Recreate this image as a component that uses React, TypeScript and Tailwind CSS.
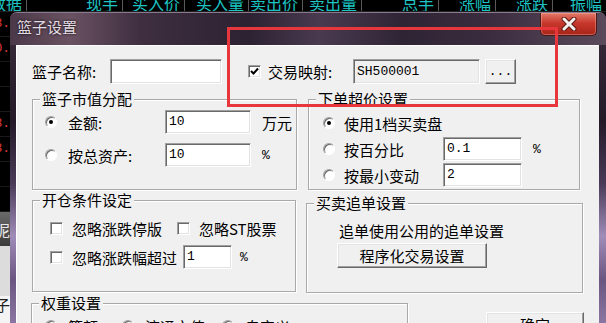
import React from 'react';

const headers = [
  { w: 'w-[27px]', t: '数据' },
  { w: 'w-[96px]', t: '现手' },
  { w: 'w-[62px]', t: '买入价' },
  { w: 'w-[64px]', t: '买入量' },
  { w: 'w-[54px]', t: '卖出价' },
  { w: 'w-[59px]', t: '卖出量' },
  { w: 'w-[77px]', t: '总手' },
  { w: 'w-[57px]', t: '涨幅' },
  { w: 'w-[57px]', t: '涨跌' },
  { w: 'w-[53px]', t: '振幅' },
];

const sideRows = ['3.', '0.', '', '', '3.', '3.', '', ''];

function Edit({ className, value }: { className: string; value?: string }) {
  return (
    <div
      className={`flex items-center box-border border border-t-[#a0a0a0] border-l-[#a0a0a0] border-r-white border-b-white shadow-[inset_1px_1px_0_#696969,inset_-1px_-1px_0_#e3e3e3] pl-[3px] font-['Liberation_Mono',monospace] text-[13px] leading-[16px] ${className}`}
    >
      {value}
    </div>
  );
}

function Radio({ on }: { on?: boolean }) {
  return (
    <span className="flex items-center justify-center w-[12px] h-[12px] shrink-0 rounded-full bg-white border border-t-[#a0a0a0] border-l-[#a0a0a0] border-r-white border-b-white shadow-[inset_1px_1px_0_#696969]">
      {on && <span className="w-[4px] h-[4px] rounded-full bg-black" />}
    </span>
  );
}

function Check({ on }: { on?: boolean }) {
  return (
    <span className="flex items-center justify-center w-[13px] h-[13px] shrink-0 bg-white border border-t-[#a0a0a0] border-l-[#a0a0a0] border-r-white border-b-white shadow-[inset_1px_1px_0_#696969,inset_-1px_-1px_0_#e3e3e3]">
      {on && (
        <svg width="9" height="9" viewBox="0 0 9 9">
          <path d="M1 4 L3.5 6.5 L8 1.5" fill="none" stroke="#000" strokeWidth="2" />
        </svg>
      )}
    </span>
  );
}

function Button({ className, children }: { className: string; children: React.ReactNode }) {
  return (
    <div
      className={`flex items-center justify-center box-border bg-[#f0f0f0] border border-t-white border-l-white border-r-[#696969] border-b-[#696969] shadow-[inset_-1px_-1px_0_#a0a0a0,inset_1px_1px_0_#e3e3e3] ${className}`}
    >
      {children}
    </div>
  );
}

function Group({ label, className, children }: { label: string; className: string; children?: React.ReactNode }) {
  return (
    <div className={`relative box-border border border-[#a9a9a9] shadow-[inset_1px_1px_0_#fff,1px_1px_0_#fff] ${className}`}>
      <span className="absolute left-[7px] -top-[10px] px-[2px] bg-[#f0f0f0] leading-[18px] whitespace-nowrap">{label}</span>
      {children}
    </div>
  );
}

export default function App() {
  return (
    <div className="relative w-[606px] h-[323px] overflow-hidden bg-black font-['Noto_Sans_CJK_SC','Noto_Sans',sans-serif]">
      {/* quote table behind the dialog */}
      <div className="flex h-[12px] border-b border-[#202020]">
        {headers.map((h) => (
          <div key={h.t} className={`${h.w} flex items-end justify-end h-[11px] overflow-hidden pr-[4px] border-r border-[#5a5a5a] last:border-r-0`}>
            <span className="text-[16px] leading-[16px] text-[#1cc4c4] whitespace-nowrap">{h.t}</span>
          </div>
        ))}
      </div>
      <div className="flex flex-col w-[10px]">
        {sideRows.map((n, i) => (
          <div key={i} className="flex items-center justify-end h-[25px] overflow-hidden border-b border-[#1a1a1a]">
            <span className="font-['Liberation_Mono',monospace] text-[13px] leading-[14px] text-[#e03a3a] whitespace-nowrap">{n}</span>
          </div>
        ))}
        <div className="flex items-center justify-end h-[34px] overflow-hidden bg-[linear-gradient(180deg,#6a6a6a,#3a3a3a)]">
          <span className="text-[15px] leading-[17px] text-[#e8e8e8] whitespace-nowrap">汇泥</span>
        </div>
        <div className="h-[50px] bg-[#dcdcdc]" />
        <div className="flex items-start justify-end h-[30px] overflow-hidden bg-[#f4f4f4]">
          <span className="text-[15px] leading-[17px] text-[#202020] whitespace-nowrap">篮子</span>
        </div>
      </div>

      {/* dialog window */}
      <div className="absolute left-[10px] top-[12px] w-[596px] h-[311px] flex flex-col rounded-t-[7px] border-t border-[#8a7a90] overflow-hidden bg-[linear-gradient(180deg,#3a2c3c_0%,#241a28_35%,#4a3a58_55%,#a08cb8_72%,#6a5680_86%,#8a76a0_100%)]">
        <div className="h-[32px] flex items-start bg-[linear-gradient(90deg,#4a3848_0%,#6a5262_10%,#3e2e40_22%,#2c2232_40%,#4a3a50_52%,#2e2434_66%,#3a2c3e_80%,#5a4a5c_100%)]">
          <span className="ml-[7px] mt-[5px] text-[15px] leading-[18px] text-[#e4dce4] [text-shadow:0_0_3px_#000]">篮子设置</span>
          <div className="ml-auto mr-[9px] w-[57px] h-[23px] flex items-center justify-center rounded-b-[5px] border border-t-0 border-[#4a1818] bg-[linear-gradient(180deg,#e27a6a_0%,#c8382c_45%,#a82418_100%)] shadow-[inset_0_0_0_1px_rgba(255,200,190,0.35)]">
            <svg width="16" height="14" viewBox="0 0 16 14">
              <path d="M3 2 L13 12 M13 2 L3 12" stroke="#5a1a14" strokeWidth="5" strokeLinecap="round" />
              <path d="M3 2 L13 12 M13 2 L3 12" stroke="#f4f0f0" strokeWidth="3" strokeLinecap="round" />
            </svg>
          </div>
        </div>

        <div className="flex-1 ml-[6px] mr-[7px] bg-[#f0f0f0] text-[15px] leading-[17px] text-black overflow-hidden shadow-[inset_1px_1px_0_#fff]">
          {/* name + mapping row */}
          <div className="flex items-center h-[25px] mt-[14px]">
            <span className="ml-[16px] w-[78px] whitespace-nowrap">篮子名称:</span>
            <Edit className="w-[112px] h-[25px] bg-white" />
            <span className="ml-[26px]">
              <Check on />
            </span>
            <span className="ml-[7px] w-[85px] whitespace-nowrap">交易映射:</span>
            <Edit className="w-[127px] h-[25px] bg-[#f0f0f0]" value="SH500001" />
            <Button className="ml-[5px] w-[31px] h-[25px] font-['Liberation_Mono',monospace] text-[13px]">...</Button>
          </div>

          {/* market value / over price */}
          <div className="flex mt-[15px]">
            <Group label="篮子市值分配" className="ml-[16px] w-[265px] h-[91px]">
              <div className="flex flex-col pt-[10px] pl-[12px] gap-[9px]">
                <div className="flex items-center h-[24px]">
                  <Radio on />
                  <span className="ml-[11px] w-[97px]">金额:</span>
                  <Edit className="w-[86px] h-[24px] bg-white" value="10" />
                  <span className="ml-[11px]">万元</span>
                </div>
                <div className="flex items-center h-[24px]">
                  <Radio />
                  <span className="ml-[11px] w-[97px]">按总资产:</span>
                  <Edit className="w-[86px] h-[24px] bg-white" value="10" />
                  <span className="ml-[11px] font-['Liberation_Mono',monospace] text-[13px]">%</span>
                </div>
              </div>
            </Group>
            <Group label="下单超价设置" className="ml-[11px] w-[272px] h-[91px]">
              <div className="flex flex-col pt-[11px] pl-[14px] gap-[2px]">
                <div className="flex items-center h-[24px]">
                  <Radio on />
                  <span className="ml-[9px] whitespace-nowrap">使用1档买卖盘</span>
                </div>
                <div className="flex items-center h-[24px]">
                  <Radio />
                  <span className="ml-[9px] w-[99px]">按百分比</span>
                  <Edit className="w-[79px] h-[24px] bg-white" value="0.1" />
                  <span className="ml-[11px] font-['Liberation_Mono',monospace] text-[13px]">%</span>
                </div>
                <div className="flex items-center h-[24px]">
                  <Radio />
                  <span className="ml-[9px] w-[99px]">按最小变动</span>
                  <Edit className="w-[79px] h-[24px] bg-white" value="2" />
                </div>
              </div>
            </Group>
          </div>

          {/* open conditions / chase */}
          <div className="flex items-start mt-[10px]">
            <Group label="开仓条件设定" className="ml-[16px] w-[264px] h-[92px]">
              <div className="flex flex-col pt-[15px] pl-[17px] gap-[5px]">
                <div className="flex items-center h-[24px]">
                  <Check />
                  <span className="ml-[9px] w-[105px] whitespace-nowrap">忽略涨跌停版</span>
                  <Check />
                  <span className="ml-[9px] whitespace-nowrap">忽略ST股票</span>
                </div>
                <div className="flex items-center h-[24px]">
                  <Check />
                  <span className="ml-[9px] w-[111px] whitespace-nowrap">忽略涨跌幅超过</span>
                  <Edit className="w-[49px] h-[24px] bg-white" value="1" />
                  <span className="ml-[8px] font-['Liberation_Mono',monospace] text-[13px]">%</span>
                </div>
              </div>
            </Group>
            <Group label="买卖追单设置" className="ml-[10px] mt-[3px] w-[277px] h-[90px]">
              <div className="flex flex-col items-start pt-[18px] pl-[30px] gap-[4px]">
                <span className="ml-[2px] whitespace-nowrap">追单使用公用的追单设置</span>
                <Button className="w-[150px] h-[25px]">程序化交易设置</Button>
              </div>
            </Group>
          </div>

          {/* weights / ok */}
          <div className="flex items-start mt-[10px]">
            <Group label="权重设置" className="ml-[15px] w-[377px] h-[60px]">
              <div className="flex items-center h-[20px] mt-[12px] pl-[13px]">
                <Radio on />
                <span className="ml-[11px] w-[54px]">等额</span>
                <Radio />
                <span className="ml-[11px] w-[77px]">流通市值</span>
                <Radio />
                <span className="ml-[11px]">自定义</span>
              </div>
            </Group>
            <Button className="ml-[78px] mt-[9px] w-[98px] h-[25px]">确定</Button>
          </div>
        </div>
      </div>

      {/* red highlight drawn over the screenshot */}
      <div className="absolute left-[227px] top-[27px] w-[331px] h-[80px] border-[3px] border-[#e8373c]" />
    </div>
  );
}
